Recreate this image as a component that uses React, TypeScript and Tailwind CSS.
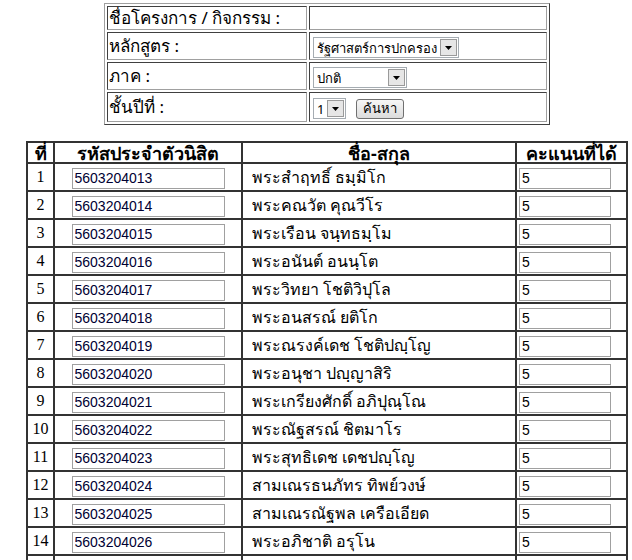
import React from 'react';

const students: [string, string][] = [
  ['5603204013', 'พระสำฤทธิ์ ธมฺมิโก'],
  ['5603204014', 'พระคณวัต คุณวีโร'],
  ['5603204015', 'พระเรือน จนฺทธมฺโม'],
  ['5603204016', 'พระอนันต์ อนนฺโต'],
  ['5603204017', 'พระวิทยา โชติวิปุโล'],
  ['5603204018', 'พระอนสรณ์ ยติโก'],
  ['5603204019', 'พระณรงค์เดช โชติปญฺโญ'],
  ['5603204020', 'พระอนุชา ปญฺญาสิริ'],
  ['5603204021', 'พระเกรียงศักดิ์ อภิปุณฺโณ'],
  ['5603204022', 'พระณัฐสรณ์ ชิตมาโร'],
  ['5603204023', 'พระสุทธิเดช เดชปญฺโญ'],
  ['5603204024', 'สามเณรธนภัทร ทิพย์วงษ์'],
  ['5603204025', 'สามเณรณัฐพล เครือเอียด'],
  ['5603204026', 'พระอภิชาติ อรุโน'],
  ['5603204027', 'พระสมชาย ฐิตธมฺโม'],
];

const Arrow = () => (
  <span className="flex h-[17px] w-[17px] shrink-0 items-center justify-center border border-[#9a9a9a] bg-[#e6e6e6]">
    <svg width="7" height="4" viewBox="0 0 7 4">
      <path d="M0 0h7L3.5 4z" fill="#000" />
    </svg>
  </span>
);

const FakeSelect = ({ value, width }: { value: string; width: string }) => (
  <span className={`inline-flex h-[21px] items-center justify-between gap-[3px] whitespace-nowrap border border-[#a5acb2] bg-white pl-[3px] pr-[1px] align-middle text-[13px] text-black ${width}`}>
    <span className="leading-[16px]">{value}</span>
    <Arrow />
  </span>
);

const cellTop = 'border border-t-[#404040] border-l-[#404040] border-r-[#a0a0a0] border-b-[#a0a0a0] p-0 align-middle';
const label = 'pl-[1px] text-[17px] leading-[20px] whitespace-nowrap';

export default function App() {
  return (
    <div className="h-[560px] overflow-hidden bg-white pl-[22px] pt-[3px] font-['Tahoma','Noto_Sans','Liberation_Sans',sans-serif] text-black">
      <div className="flex flex-col items-center">
        <table className="border-separate border-spacing-[2px] border border-t-[#a0a0a0] border-l-[#a0a0a0] border-r-[#404040] border-b-[#404040]">
          <tbody>
            <tr>
              <td className={`${cellTop} ${label} h-[24px] w-[200px]`}>ชื่อโครงการ / กิจกรรม :</td>
              <td className={`${cellTop} h-[24px] w-[238px]`}></td>
            </tr>
            <tr>
              <td className={`${cellTop} ${label} h-[28px]`}>หลักสูตร :</td>
              <td className={`${cellTop} h-[28px] pl-[3px]`}>
                <FakeSelect value="รัฐศาสตร์การปกครอง" width="w-auto text-[12px]" />
              </td>
            </tr>
            <tr>
              <td className={`${cellTop} ${label} h-[28px]`}>ภาค :</td>
              <td className={`${cellTop} h-[28px] pl-[3px]`}>
                <FakeSelect value="ปกติ" width="w-[94px]" />
              </td>
            </tr>
            <tr>
              <td className={`${cellTop} ${label} h-[30px]`}>ชั้นปีที่ :</td>
              <td className={`${cellTop} h-[30px] pl-[3px]`}>
                <span className="inline-flex items-center gap-[10px] align-middle">
                  <FakeSelect value="1" width="w-[33px]" />
                  <button className="h-[20px] rounded-[3px] border border-[#707070] bg-gradient-to-b from-[#f6f6f6] to-[#dcdcdc] px-[6px] text-[13px] leading-none text-black">
                    ค้นหา
                  </button>
                </span>
              </td>
            </tr>
          </tbody>
        </table>

        <table className="mt-[16px] w-[600px] table-fixed border-collapse border-2 border-[#333]">
          <colgroup>
            <col className="w-[27px]" />
            <col className="w-[188px]" />
            <col className="w-[274px]" />
            <col className="w-[111px]" />
          </colgroup>
          <thead>
            <tr className="h-[21px]">
              {['ที่', 'รหัสประจำตัวนิสิต', 'ชื่อ-สกุล', 'คะแนนที่ได้'].map(h => (
                <th key={h} className="h-[21px] whitespace-nowrap border-2 border-[#333] p-0 text-center text-[18px] font-bold leading-[18px]">{h}</th>
              ))}
            </tr>
          </thead>
          <tbody>
            {students.map(([id, name], i) => (
              <tr key={id} className="h-[28px]">
                <td className="border-2 border-[#333] p-0 text-center font-['Liberation_Serif',serif] text-[16px]">{i + 1}</td>
                <td className="border-2 border-[#333] p-0 text-center">
                  <input
                    readOnly
                    value={id}
                    className="h-[21px] w-[153px] border border-[#a0a0a0] px-[2px] align-middle font-['Liberation_Sans',sans-serif] text-[14px] text-[#000033] outline-none"
                  />
                </td>
                <td className="border-2 border-[#333] p-0 pl-[9px] text-[16px] leading-[20px]">{name}</td>
                <td className="border-2 border-[#333] p-0 pl-[2px]">
                  <input
                    readOnly
                    value="5"
                    className="h-[21px] w-[92px] border border-[#a0a0a0] px-[2px] align-middle font-['Liberation_Sans',sans-serif] text-[14px] text-black outline-none"
                  />
                </td>
              </tr>
            ))}
          </tbody>
        </table>
      </div>
    </div>
  );
}
